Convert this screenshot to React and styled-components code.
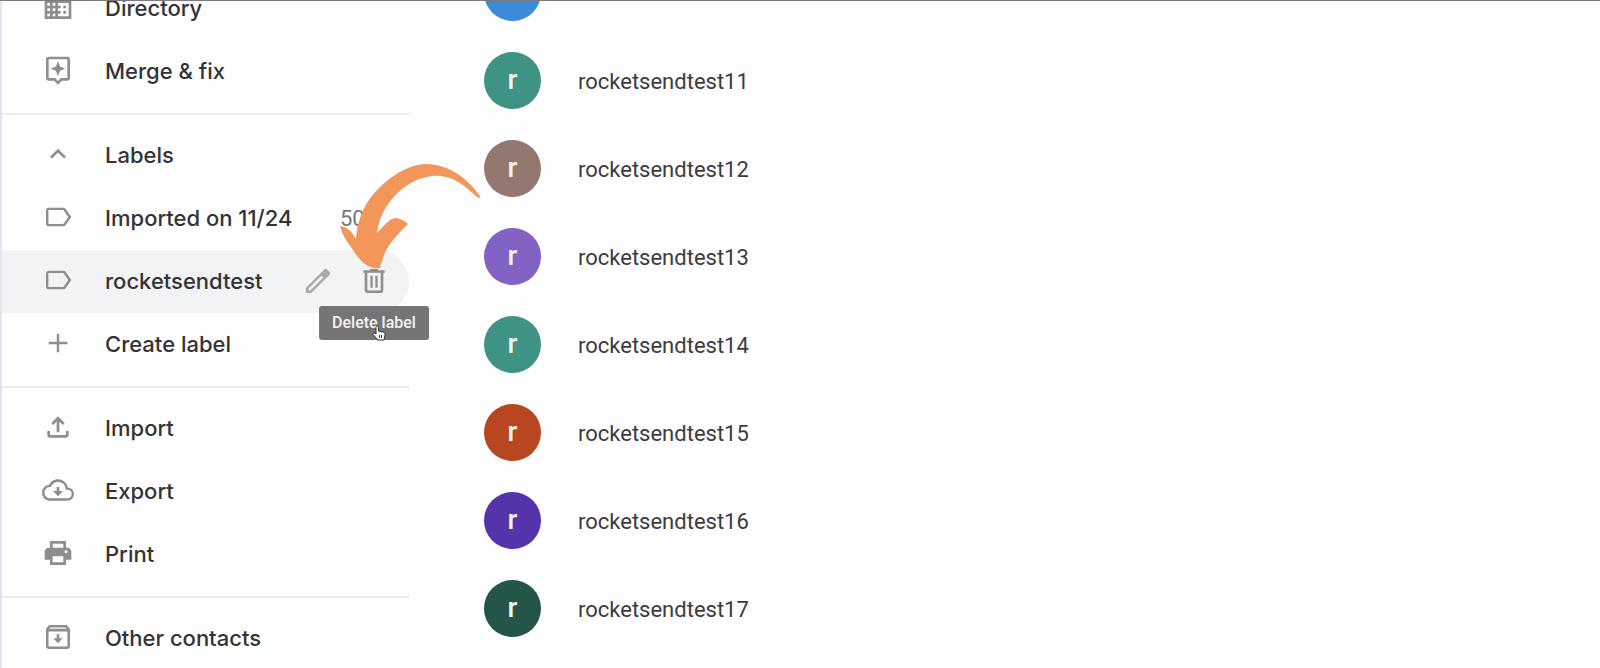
import React from "react";
import styled, { createGlobalStyle } from "styled-components";

const SANS = `Inter, "Liberation Sans", sans-serif`;
const ROBOTO = `Roboto, "Liberation Sans", sans-serif`;

const GlobalStyle = createGlobalStyle`
  *, *::before, *::after { box-sizing: border-box; }
  body { margin: 0; background: #fefefe; color: #333; font-family: ${ROBOTO}; }
`;

const Page = styled.div`
  display: flex;
  height: 100vh;
  overflow: hidden;
  border-top: 1px solid #7b797c;
`;

const Sidebar = styled.nav`
  flex: 0 0 409px;
  border-left: 2px solid #e4e4ee;
`;

const NavList = styled.ul`
  list-style: none;
  margin: -24px 0 0;
  padding: 0;
`;

const NavRow = styled.li`
  position: relative;
  display: flex;
  align-items: center;
  height: 63px;
  padding-right: 19px;
  border-radius: 0 32px 32px 0;
  background: ${(p) => (p.$active ? "#f2f3f5" : "transparent")};
`;

const NavButton = styled.button`
  flex: 1;
  display: flex;
  align-items: center;
  gap: 31px;
  height: 100%;
  padding: 0 0 2px 40px;
  border: 0;
  background: none;
  color: #333335;
  font: 500 22px/32px ${SANS};
  text-align: left;
  white-space: nowrap;
  cursor: pointer;
`;

const Icon = styled.svg`
  display: block;
  flex: none;
  width: 32px;
  height: 32px;
  margin-bottom: 2px;
  fill: ${(p) => (p.$light ? "#a9a9ab" : "#8e8e8e")};
`;

const Count = styled.span`
  width: 50px;
  color: #777;
  font-size: 22px;
  line-height: 32px;
`;

const Actions = styled.div`
  display: flex;
  gap: 24px;
`;

const ActionButton = styled.button`
  position: relative;
  padding: 0;
  border: 0;
  background: none;
  cursor: pointer;
`;

const Divider = styled.li`
  height: 2px;
  margin: 10px 0 9px;
  background: #ececee;
`;

const Tooltip = styled.span`
  position: absolute;
  z-index: 1;
  top: 41px;
  left: 50%;
  transform: translateX(-50%);
  padding: 5px 13px;
  border-radius: 3px;
  background: #757575;
  color: #f4f4f4;
  font: 500 16px/24px ${ROBOTO};
  white-space: nowrap;
`;

const HandCursor = styled.svg`
  position: absolute;
  z-index: 2;
  top: 60px;
  left: 14px;
  width: 14px;
  height: 16px;
`;

const Pointer = styled.svg`
  position: absolute;
  z-index: 3;
  right: -72px;
  bottom: -20px;
  width: 142px;
  height: 106px;
  fill: #f2965a;
  pointer-events: none;
`;

const Contacts = styled.main`
  flex: 1;
  min-width: 0;
`;

const ContactList = styled.ul`
  list-style: none;
  margin: -53px 0 0;
  padding: 0 0 0 75px;
`;

const Contact = styled.li`
  display: flex;
  align-items: center;
  gap: 37px;
  height: 88px;
`;

const ContactName = styled.span`
  padding-top: 4px;
  color: #3c3c3e;
  font-size: 22px;
  line-height: 32px;
`;

const Avatar = styled.span`
  display: grid;
  place-items: center;
  width: 57px;
  height: 57px;
  padding-bottom: 2px;
  border-radius: 50%;
  background: ${(p) => p.$color};
  color: #eef2f2;
  font-size: 28px;
  font-weight: 500;
`;

const PATHS = {
  directory:
    "M12 7V3H2v18h20V7H12zM6 19H4v-2h2v2zm0-4H4v-2h2v2zm0-4H4V9h2v2zm0-4H4V5h2v2zm4 12H8v-2h2v2zm0-4H8v-2h2v2zm0-4H8V9h2v2zm0-4H8V5h2v2zm10 12h-8v-2h2v-2h-2v-2h2v-2h-2V9h8v10zm-2-8h-2v2h2v-2zm0 4h-2v2h2v-2z",
  merge:
    "M19 2H5c-1.100 0-2 .9-2 2v14c0 1.100.9 2 2 2h4l3 3 3-3h4c1.100 0 2-.9 2-2V4c0-1.100-.9-2-2-2zm0 16h-4.830L12 20.170 9.830 18H5V4h14v14zM12 16.500l1.570-3.930L17.500 11l-3.930-1.570L12 5.500l-1.570 3.930L6.500 11l3.930 1.570z",
  collapse: "M12 8l-6 6 1.410 1.410L12 10.830l4.590 4.580L18 14z",
  label:
    "M17.630 5.840C17.270 5.330 16.670 5 16 5H5c-1.100 0-2 .9-2 2v10c0 1.100.9 2 2 2h11c.67 0 1.270-.33 1.630-.84L22 12l-4.370-6.160zM16 17.200H4.800V6.800H16L19.700 12 16 17.200z",
  add: "M19 12.900h-6.100V19h-1.800v-6.100H5v-1.800h6.100V5h1.800v6.100H19z",
  upload:
    "M18 15v3H6v-3H4v3c0 1.100.9 2 2 2h12c1.100 0 2-.9 2-2v-3h-2zM7 9l1.410 1.410L11 7.830V16h2V7.830l2.590 2.580L17 9l-5-5-5 5z",
  cloud:
    "M19.350 10.040A7.490 7.490 0 0 0 12 4C9.110 4 6.600 5.640 5.350 8.040A5.994 5.994 0 0 0 0 14c0 3.310 2.690 6 6 6h13c2.760 0 5-2.240 5-5 0-2.640-2.050-4.780-4.650-4.960zM19 18.200H6a4.200 4.200 0 0 1-.4-8.380l1-.1.500-.9A5.700 5.700 0 0 1 17.600 10.400l.3 1.400 1.500.1A3.160 3.160 0 0 1 19 18.200zM11 9.800h2v3h2.800L12 16.600l-3.800-3.800H11z",
  print:
    "M19 8h-1V3H6v5H5c-1.660 0-3 1.340-3 3v6h4v4h12v-4h4v-6c0-1.660-1.340-3-3-3zM8 5h8v3H8V5zm8 14H8v-4.500h8V19zm2-6.800a1.100 1.100 0 1 1 0-2.200 1.100 1.100 0 0 1 0 2.200z",
  archive:
    "M20.540 5.230l-1.390-1.680C18.880 3.210 18.470 3 18 3H6c-.47 0-.88.210-1.160.550L3.460 5.230C3.170 5.570 3 6.020 3 6.500V19c0 1.100.9 2 2 2h14c1.100 0 2-.9 2-2V6.500c0-.48-.17-.93-.46-1.270zM6.240 4.800h11.520l.83 1H5.420l.82-1zM4.900 19.100V7.800h14.200v11.300H4.900zM11 10v3H8.500l3.500 3.600 3.500-3.600H13v-3z",
  edit: "M3 17V20.200a.8.800 0 0 0 .8.800H7L20.700 7.300a1.500 1.500 0 0 0 0-2.100L18.800 3.300a1.500 1.500 0 0 0-2.100 0zM6.200 19.200H4.800v-1.400L14.600 8l1.400 1.400z",
  trash:
    "M15 4V3H9v1H4v1.800h1V19c0 1.100.9 2 2 2h10c1.100 0 2-.9 2-2V5.800h1V4h-5zm2 15.100H7V5.800h10v13.300zM9.300 8h1.700v9H9.300zm3.700 0h1.700v9H13z",
};

function Glyph({ name, light }) {
  return (
    <Icon viewBox="0 0 24 24" $light={light} aria-hidden="true">
      <path fillRule="evenodd" d={PATHS[name]} />
    </Icon>
  );
}

function NavItem({ icon, label, active, children }) {
  return (
    <NavRow $active={active}>
      <NavButton type="button">
        <Glyph name={icon} />
        {label}
      </NavButton>
      {children}
    </NavRow>
  );
}

const CONTACTS = [
  ["rocketsendtest10", "#3a8bd8"],
  ["rocketsendtest11", "#3f9384"],
  ["rocketsendtest12", "#93786f"],
  ["rocketsendtest13", "#8262c4"],
  ["rocketsendtest14", "#3f9384"],
  ["rocketsendtest15", "#b84620"],
  ["rocketsendtest16", "#5433ab"],
  ["rocketsendtest17", "#235548"],
  ["rocketsendtest18", "#8262c4"],
];

export default function App() {
  return (
    <>
      <GlobalStyle />
      <Page>
        <Sidebar aria-label="Contacts navigation">
          <NavList>
            <NavItem icon="directory" label="Directory" />
            <NavItem icon="merge" label="Merge &amp; fix" />
            <Divider role="separator" />
            <NavItem icon="collapse" label="Labels" />
            <NavItem icon="label" label="Imported on 11/24">
              <Count>50</Count>
              <Pointer viewBox="0 0 142 106" aria-hidden="true">
                <path d="M141 32C126 11 107 0 86 0C74 1 65 5 56 11C44 19 35 28 28 39C21 51 18 62 17 75C13 68 9 63 1 62C3 70 7 77 12 83C17 91 21 96 26 100C30 103 35 105 41 104C43 96 45 90 49 83C55 74 62 67 69 60C66 57 62 55 58 54C50 54 45 62 38 69C41 44 62 16 93 12C112 10 124 20 138 33C140 34 142 34 141 32Z" />
              </Pointer>
            </NavItem>
            <NavItem icon="label" label="rocketsendtest" active>
              <Actions>
                <ActionButton type="button" aria-label="Edit label">
                  <Glyph name="edit" light />
                </ActionButton>
                <ActionButton type="button" aria-label="Delete label">
                  <Glyph name="trash" />
                  <Tooltip role="tooltip">Delete label</Tooltip>
                  <HandCursor viewBox="0 0 14 16" aria-hidden="true">
                    <path
                      d="M4 9V2.500C4 .5 6.500.5 6.500 2.500V6L11.500 7.200C13 7.600 13.300 8.500 13 10L12 15H6L1 9.500C.5 8 2.500 7.500 4 9Z"
                      fill="#fff"
                      stroke="#333"
                    />
                    <path d="M7.500 10v3M9.500 10v3" fill="none" stroke="#333" />
                  </HandCursor>
                </ActionButton>
              </Actions>
            </NavItem>
            <NavItem icon="add" label="Create label" />
            <Divider role="separator" />
            <NavItem icon="upload" label="Import" />
            <NavItem icon="cloud" label="Export" />
            <NavItem icon="print" label="Print" />
            <Divider role="separator" />
            <NavItem icon="archive" label="Other contacts" />
          </NavList>
        </Sidebar>
        <Contacts>
          <ContactList>
            {CONTACTS.map(([name, color]) => (
              <Contact key={name}>
                <Avatar $color={color} aria-hidden="true">r</Avatar>
                <ContactName>{name}</ContactName>
              </Contact>
            ))}
          </ContactList>
        </Contacts>
      </Page>
    </>
  );
}
